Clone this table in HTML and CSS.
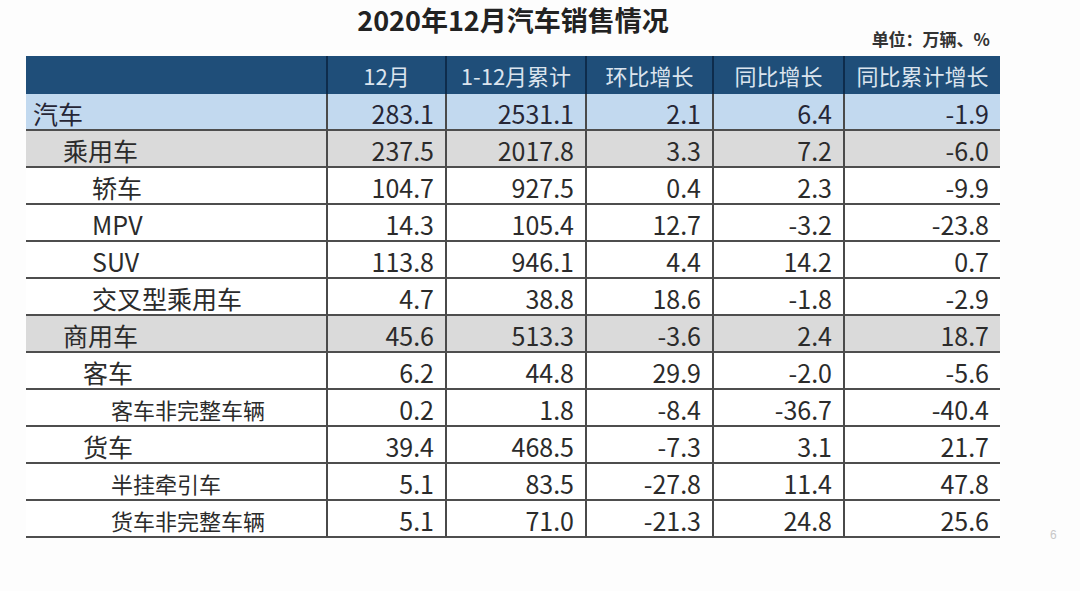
FILE: index.html
```html
<!DOCTYPE html>
<html lang="zh-CN">
<head>
<meta charset="utf-8">
<title>2020年12月汽车销售情况</title>
<link rel="stylesheet" href="styles.css">
</head>
<body>
<div class="page">
  <div class="head">
    <h1 class="title">2020年12月汽车销售情况</h1>
    <div class="unit">单位：万辆、%</div>
  </div>
  <div class="table">
    <div class="row row-head">
      <div class="cell label"></div>
      <div class="cell">12月</div>
      <div class="cell">1-12月累计</div>
      <div class="cell">环比增长</div>
      <div class="cell">同比增长</div>
      <div class="cell">同比累计增长</div>
    </div>
    <div class="row row-total">
      <div class="cell label lv0">汽车</div>
      <div class="cell num">283.1</div><div class="cell num">2531.1</div><div class="cell num">2.1</div><div class="cell num">6.4</div><div class="cell num">-1.9</div>
    </div>
    <div class="row row-group">
      <div class="cell label lv1">乘用车</div>
      <div class="cell num">237.5</div><div class="cell num">2017.8</div><div class="cell num">3.3</div><div class="cell num">7.2</div><div class="cell num">-6.0</div>
    </div>
    <div class="row">
      <div class="cell label lv2">轿车</div>
      <div class="cell num">104.7</div><div class="cell num">927.5</div><div class="cell num">0.4</div><div class="cell num">2.3</div><div class="cell num">-9.9</div>
    </div>
    <div class="row">
      <div class="cell label lv2">MPV</div>
      <div class="cell num">14.3</div><div class="cell num">105.4</div><div class="cell num">12.7</div><div class="cell num">-3.2</div><div class="cell num">-23.8</div>
    </div>
    <div class="row">
      <div class="cell label lv2">SUV</div>
      <div class="cell num">113.8</div><div class="cell num">946.1</div><div class="cell num">4.4</div><div class="cell num">14.2</div><div class="cell num">0.7</div>
    </div>
    <div class="row">
      <div class="cell label lv2">交叉型乘用车</div>
      <div class="cell num">4.7</div><div class="cell num">38.8</div><div class="cell num">18.6</div><div class="cell num">-1.8</div><div class="cell num">-2.9</div>
    </div>
    <div class="row row-group">
      <div class="cell label lv1">商用车</div>
      <div class="cell num">45.6</div><div class="cell num">513.3</div><div class="cell num">-3.6</div><div class="cell num">2.4</div><div class="cell num">18.7</div>
    </div>
    <div class="row">
      <div class="cell label lv2b">客车</div>
      <div class="cell num">6.2</div><div class="cell num">44.8</div><div class="cell num">29.9</div><div class="cell num">-2.0</div><div class="cell num">-5.6</div>
    </div>
    <div class="row">
      <div class="cell label lv3">客车非完整车辆</div>
      <div class="cell num">0.2</div><div class="cell num">1.8</div><div class="cell num">-8.4</div><div class="cell num">-36.7</div><div class="cell num">-40.4</div>
    </div>
    <div class="row">
      <div class="cell label lv2b">货车</div>
      <div class="cell num">39.4</div><div class="cell num">468.5</div><div class="cell num">-7.3</div><div class="cell num">3.1</div><div class="cell num">21.7</div>
    </div>
    <div class="row">
      <div class="cell label lv3">半挂牵引车</div>
      <div class="cell num">5.1</div><div class="cell num">83.5</div><div class="cell num">-27.8</div><div class="cell num">11.4</div><div class="cell num">47.8</div>
    </div>
    <div class="row">
      <div class="cell label lv3">货车非完整车辆</div>
      <div class="cell num">5.1</div><div class="cell num">71.0</div><div class="cell num">-21.3</div><div class="cell num">24.8</div><div class="cell num">25.6</div>
    </div>
  </div>
</div>
<div class="pagenum">6</div>
</body>
</html>
```
FILE: styles.css
```css
html, body {
  margin: 0;
  padding: 0;
  background: #fdfdfd;
}
body {
  width: 1080px;
  height: 591px;
  position: relative;
  overflow: hidden;
  font-family: "Noto Sans CJK SC", "Noto Sans", sans-serif;
  color: #2b2b2b;
}
.page {
  padding-left: 26px;
  width: 974px;
}
.head {
  display: flex;
  flex-direction: column;
  padding-top: 2px;
  height: 54px;
}
.title {
  margin: 0;
  text-align: center;
  font-size: 27px;
  line-height: 36px;
  height: 36px;
  font-weight: 700;
  color: #222;
}
.unit {
  align-self: flex-end;
  margin-top: -10px;
  padding-right: 10px;
  font-size: 17px;
  line-height: 22px;
  font-weight: 700;
  color: #333;
}
.table {
  display: flex;
  flex-direction: column;
}
.row {
  display: grid;
  grid-template-columns: 300px 119px 140px 127px 131px 157px;
  height: 37px;
  box-sizing: border-box;
  border-bottom: 2px solid #4e4e4e;
  background: #fff;
}
.cell {
  box-sizing: border-box;
  border-left: 2px solid #4a4a4a;
  font-size: 25px;
  line-height: 33px;
  padding-top: 3px;
  white-space: nowrap;
}
.cell.label {
  border-left: none;
}
.num {
  text-align: right;
  padding-right: 11px;
}
.row-head {
  height: 38px;
  background: #1f4e79;
  border-bottom: none;
}
.row-head .cell {
  border-left-color: #0e2c4c;
  text-align: center;
  color: #dbe4ee;
  font-size: 22px;
  line-height: 37px;
  padding-top: 1px;
}
.row-head .cell.label {
  border-left: none;
}
.row-total {
  background: #c2d9ef;
  color: #262636;
}
.row-group {
  background: #dadada;
}
.lv0 { padding-left: 7px; }
.lv1 { padding-left: 37px; }
.lv2 { padding-left: 66px; }
.lv2b { padding-left: 57px; }
.lv3 { padding-left: 85px; font-size: 22px; }
.pagenum {
  position: absolute;
  left: 1050px;
  top: 528px;
  font-size: 12px;
  color: #c8c8c8;
  font-family: "Liberation Sans", sans-serif;
}
```
